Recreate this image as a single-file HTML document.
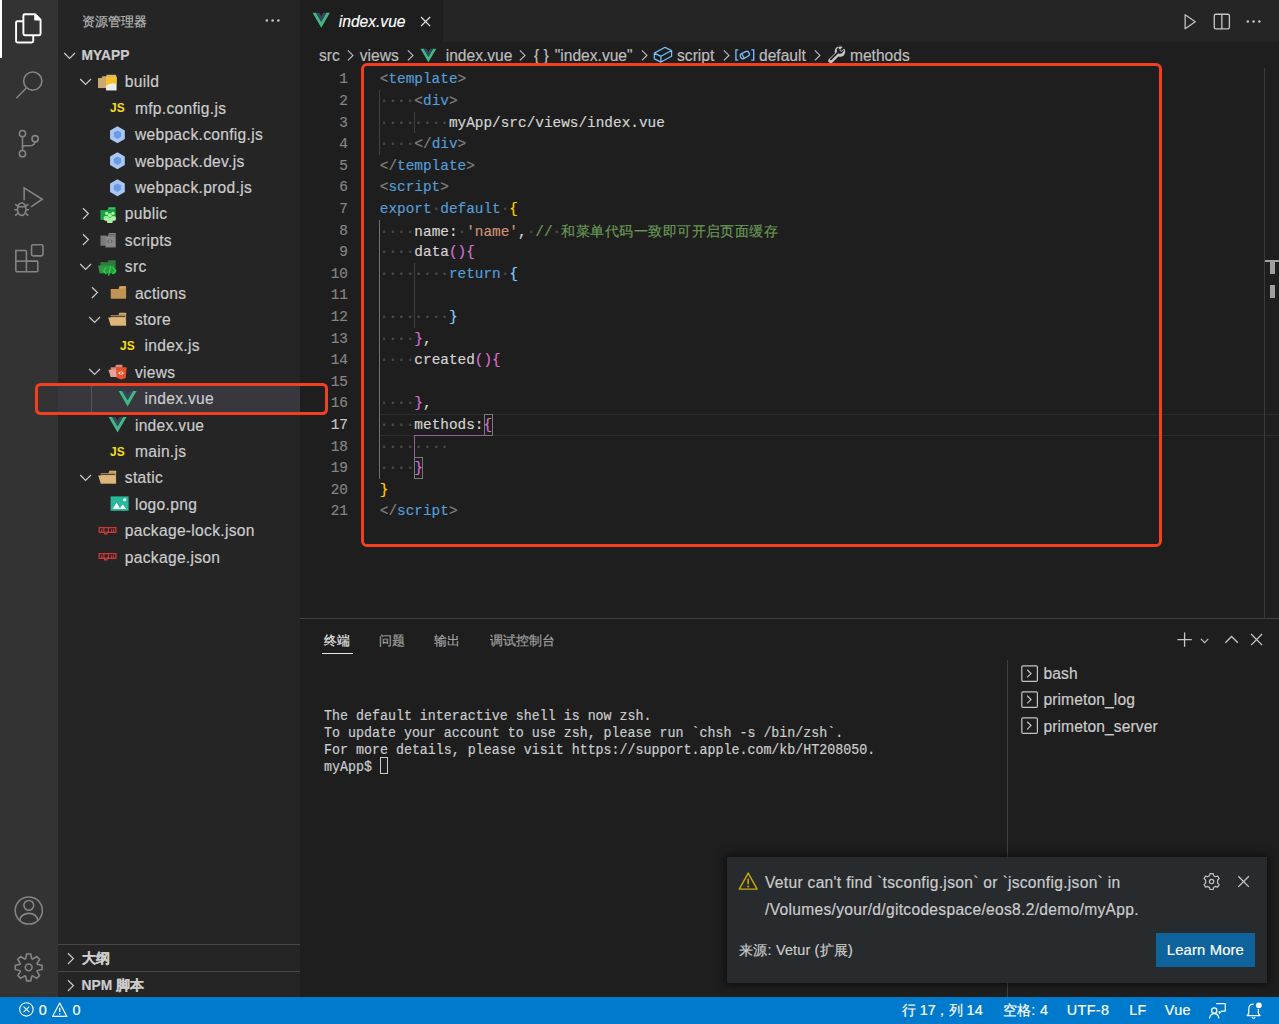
<!DOCTYPE html>
<html><head><meta charset="utf-8">
<style>
html,body{margin:0;padding:0;background:#1e1e1e;overflow:hidden;}
body{width:1279px;height:1024px;}
#w{position:absolute;left:0;top:0;width:1066px;height:854px;zoom:1.2;-webkit-text-stroke:0.15px currentColor;font-family:"Liberation Sans",sans-serif;color:#cccccc;overflow:hidden;background:#1e1e1e;}
.a{position:absolute;}
#act{left:0;top:0;width:48px;height:831px;background:#333333;}
#side{left:48px;top:0;width:202px;height:831px;background:#252526;}
#tabs{left:250px;top:0;width:816px;height:35px;background:#252526;}
#tab{left:250px;top:0;width:119px;height:35px;background:#1e1e1e;}
#editor{left:250px;top:35px;width:816px;height:480px;background:#1e1e1e;}
#panel{left:250px;top:515px;width:816px;height:316px;background:#1e1e1e;border-top:1px solid #414141;box-sizing:border-box;}
#status{left:0;top:831px;width:1066px;height:23px;background:#007acc;color:#fff;font-size:12px;}
.sb{height:22px;line-height:22px;font-size:13px;color:#cccccc;white-space:nowrap;letter-spacing:0.25px}
.row{position:absolute;left:0;width:202px;height:22px;line-height:22px;font-size:13px;color:#cccccc;white-space:nowrap;}
.row .t{position:absolute;top:0;}
.row svg{position:absolute;}
.code{position:absolute;left:316.5px;margin-top:0.8px;font-family:"Liberation Mono",monospace;font-size:12px;line-height:18px;height:18px;white-space:pre;color:#d4d4d4;}
.ln{position:absolute;left:250px;margin-top:0.8px;width:40px;text-align:right;font-family:"Liberation Mono",monospace;font-size:12px;line-height:18px;color:#858585;}
.p{color:#808080}.tg{color:#569cd6}.kw{color:#569cd6}.s{color:#ce9178}.c{color:#6a9955}.y{color:#ffd700}.m{color:#da70d6}.b{color:#87cefa}
.kw2{color:#569cd6}.cj{font-family:"Liberation Sans",sans-serif;letter-spacing:0.4px}
.pt{top:522.5px;height:24px;line-height:24px;font-size:11px;color:rgba(231,231,231,0.6)}
.st{top:831px;height:22px;line-height:22px;font-size:12px;color:#fff;white-space:nowrap;letter-spacing:0.3px}
.ws{color:rgba(227,228,226,0.22);font-weight:bold}
.term{position:absolute;left:270px;font-family:"Liberation Mono",monospace;font-size:11.1px;line-height:12.61px;white-space:pre;color:#cccccc;transform:scale(1,1.13);transform-origin:0 0}
</style></head><body><svg width="0" height="0" style="position:absolute">
<defs>
<symbol id="chd" viewBox="0 0 16 16"><path d="M3.5 5.8 L8 10.3 L12.5 5.8" fill="none" stroke="#c5c5c5" stroke-width="1.1"/></symbol>
<symbol id="chr" viewBox="0 0 16 16"><path d="M5.8 3.5 L10.3 8 L5.8 12.5" fill="none" stroke="#c5c5c5" stroke-width="1.1"/></symbol>
<symbol id="fclosed" viewBox="0 0 16 16"><path d="M2.3 5 H15.1 V13.1 H2.3 Z" fill="#c09553"/><path d="M9.5 2.5 H14.6 Q15.1 2.5 15.1 3 V5 H8.8 Z" fill="#c09553"/><path d="M9.9 3.5 H14.3 V4.3 H9.6Z" fill="#d9b27a"/></symbol>
<symbol id="fopen" viewBox="0 0 16 16"><path d="M2.3 4.4 H15.1 V12.94 H2.3 Z" fill="#c4a06a"/><path d="M9.5 2.25 H14.6 Q15.1 2.25 15.1 2.75 V4.4 H8.8 Z" fill="#dcb67a"/><path d="M9.9 3.2 H14.3 V4 H9.6Z" fill="#b08d5a"/><path d="M0.2 6.3 H14.3 L15.1 12.94 H2.3 Z" fill="#dcb67a"/><path d="M2.3 5.4 H14.2" stroke="#3a3226" stroke-width="0.7"/></symbol>
<symbol id="js" viewBox="0 0 16 16"><text transform="scale(0.92 1)" x="0.1" y="11.9" font-family="Liberation Sans" font-weight="bold" font-size="10.9" fill="#f5de19">JS</text></symbol>
<symbol id="wp" viewBox="0 0 16 16"><path d="M6.2 1 L12.35 4.55 V11.65 L6.2 15.2 L0.05 11.65 V4.55 Z" fill="#a9c7f3"/><path d="M6.2 4.6 L9.23 6.35 V9.85 L6.2 11.6 L3.17 9.85 V6.35 Z" fill="#6a9be6"/></symbol>
<symbol id="vue" viewBox="0 0 16 16"><g transform="translate(0.5 1.6) scale(0.05859)"><path d="M0 0 L128 220.8 L256 0 H204.8 L128 132.48 L50.56 0 Z" fill="#41b883"/><path d="M50.56 0 L128 133.12 L204.8 0 H157.44 L128 51.2 L97.92 0 Z" fill="#35495e"/></g></symbol>
<symbol id="npm" viewBox="0 0 16 16"><g><path d="M0.5 5 H15.5 V10 H8 V11.2 H5 V10 H0.5 Z" fill="#cb3837"/><path d="M1.6 6 H4.4 V9 H3.6 V6.8 H2.6 V9 H1.6Z M5.4 6 H8.2 V8.6 H6.9 V9.6 H6.1 V8.6 H5.4Z M9.2 6 H14.4 V9 H13.5 V6.8 H12.6 V9 H11.8 V6.8 H10.9 V9 H9.2Z" fill="#252526"/></g></symbol>
<symbol id="img" viewBox="0 0 16 16"><rect x="0.5" y="2" width="15" height="12" fill="#26b99a"/><path d="M2.2 12.5 L5.5 7 L8.5 12.5Z M8 12.5 L10.6 8.8 L13.6 12.5Z" fill="#fff"/><circle cx="12.3" cy="4.8" r="1.3" fill="#fff"/></symbol>
</defs></svg><div id="w">
<div class="a" id="act">
<div class="a" style="left:0;top:0;width:2px;height:48px;background:#fff"></div>
<svg class="a" style="left:0;top:0" width="48" height="831" viewBox="0 0 48 831" fill="none">
<g stroke="#ffffff" stroke-width="1.6" stroke-linejoin="round">
<path d="M19.5 17.6 H14.6 Q13.4 17.6 13.4 18.8 V34.2 Q13.4 35.4 14.6 35.4 H26.5 Q27.7 35.4 27.7 34.2 V29.3"/>
<path d="M20.7 11.8 H29.3 L33.8 16.3 V28.1 Q33.8 29.3 32.6 29.3 H20.7 Q19.5 29.3 19.5 28.1 V13 Q19.5 11.8 20.7 11.8 Z"/>
<path d="M29.3 11.8 V16.3 H33.8" fill="#fff"/>
</g>
<g stroke="#858585" stroke-width="1.3" fill="none">
<circle cx="27.3" cy="67.5" r="7.6"/>
<path d="M21.9 73.3 L13.6 81.8"/>
<circle cx="18.75" cy="111.3" r="2.6"/>
<circle cx="29.25" cy="115.6" r="2.6"/>
<circle cx="18.75" cy="128" r="2.6"/>
<path d="M18.75 113.9 V125.4"/>
<path d="M29.25 118.2 Q28.5 121.5 24.5 121.5 H21 Q18.75 121.5 18.75 123"/>
<path d="M20.13 166.8 V156.6 L35.2 166 L25.8 172.4" stroke-linejoin="miter"/>
<ellipse cx="18.1" cy="174.3" rx="3.55" ry="5.2"/>
<path d="M14.6 172.3 H21.6 M12.6 170.2 L14.85 171.7 M23.6 170.2 L21.35 171.7 M12 174.7 H14.5 M24.2 174.7 H21.7 M12.6 179.6 L14.85 177.8 M23.6 179.6 L21.35 177.8"/>
<path d="M13.2 208.7 H21.3 Q22 208.7 22 209.4 V226.5 H14 Q13.2 226.5 13.2 225.7 Z"/>
<path d="M22 217.6 H30.8 Q31.5 217.6 31.5 218.3 V225.7 Q31.5 226.5 30.8 226.5 H22"/>
<path d="M13.2 217.6 H22"/>
<rect x="26.3" y="204" width="9.5" height="9.2" rx="1.3"/>
<circle cx="24" cy="758.8" r="11.3"/>
<circle cx="24" cy="754.5" r="4.1"/>
<path d="M16.3 767.2 Q17.5 761.2 24 761.2 Q30.5 761.2 31.7 767.2"/>
</g>
<g transform="translate(23.9 806.25)" stroke="#858585" stroke-width="1.3" fill="none" stroke-linejoin="miter"><path d="M-2.63 -7.24 L-1.67 -11.18 L1.67 -11.18 L2.63 -7.24 L3.25 -6.98 L6.72 -9.08 L9.08 -6.72 L6.98 -3.25 L7.24 -2.63 L11.18 -1.67 L11.18 1.67 L7.24 2.63 L6.98 3.25 L9.08 6.72 L6.72 9.08 L3.25 6.98 L2.63 7.24 L1.67 11.18 L-1.67 11.18 L-2.63 7.24 L-3.25 6.98 L-6.72 9.08 L-9.08 6.72 L-6.98 3.25 L-7.24 2.63 L-11.18 1.67 L-11.18 -1.67 L-7.24 -2.63 L-6.98 -3.25 L-9.08 -6.72 L-6.72 -9.08 L-3.25 -6.98 Z"/><circle cx="0" cy="0" r="2.8"/></g>
</svg>
</div>
<div class="a" id="side"></div>
<div class="a" style="left:68px;top:0.7px;height:35px;line-height:35px;font-size:11px;color:#bbbbbb">资源管理器</div>
<svg class="a" style="left:219px;top:9px" width="16" height="16" viewBox="0 0 16 16" fill="#c5c5c5"><circle cx="3.2" cy="8" r="1.05"/><circle cx="8" cy="8" r="1.05"/><circle cx="12.8" cy="8" r="1.05"/></svg>
<svg class="a" style="left:50px;top:38px" width="16" height="16"><use href="#chd"/></svg>
<div class="a" style="left:68px;top:35.7px;height:22px;line-height:22px;font-size:11.5px;font-weight:bold;color:#cccccc">MYAPP</div>
<svg class="a" style="left:63px;top:60px" width="16" height="16"><use href="#chd"/></svg><svg class="a" style="left:82px;top:60px" width="16" height="16" viewBox="0 0 16 16"><path d="M0 5 H9.6 V13.4 H0 Z" fill="#c8aa6e"/><path d="M3.6 3.6 H8.6 Q9.2 3.6 9.2 4.2 V5 H3 Z" fill="#c8aa6e"/><path d="M6.7 4.2 H15.5 V15.4 H6.7 Z" fill="#ececec"/><path d="M6.7 4.2 H15.5 V10.2 Q11.1 8.2 6.7 11.6 Z" fill="#f6c026"/><path d="M7.2 2.2 H15 L15.5 4.4 H6.7 Z" fill="#d7b56d"/></svg><div class="a sb" style="left:104px;top:57.8px">build</div>
<svg class="a" style="left:92px;top:82px" width="16" height="16"><use href="#js"/></svg><div class="a sb" style="left:112.4px;top:79.8px">mfp.config.js</div>
<svg class="a" style="left:92px;top:104px" width="16" height="16"><use href="#wp"/></svg><div class="a sb" style="left:112.4px;top:101.8px">webpack.config.js</div>
<svg class="a" style="left:92px;top:126px" width="16" height="16"><use href="#wp"/></svg><div class="a sb" style="left:112.4px;top:123.8px">webpack.dev.js</div>
<svg class="a" style="left:92px;top:148px" width="16" height="16"><use href="#wp"/></svg><div class="a sb" style="left:112.4px;top:145.8px">webpack.prod.js</div>
<svg class="a" style="left:63px;top:170px" width="16" height="16"><use href="#chr"/></svg><svg class="a" style="left:82px;top:170px" width="16" height="16" viewBox="0 0 16 16"><path d="M2.05 5.1 H14.75 V13.3 H2.05 Z" fill="#1ba345"/><path d="M8.6 2.5 H14.2 Q14.75 2.5 14.75 3 V5.1 H7.9 Z" fill="#1ba345"/><path d="M9.2 3.3 H14 V4.2 H8.9 Z" fill="#45c46a"/><g fill="#a8f2a0"><circle cx="7.2" cy="7.8" r="1.35"/><circle cx="12.5" cy="7.8" r="1.35"/><ellipse cx="6.9" cy="12" rx="2.2" ry="2"/><ellipse cx="12.8" cy="12" rx="2.2" ry="2"/><circle cx="9.86" cy="9.4" r="1.6"/><ellipse cx="9.86" cy="13.9" rx="2.6" ry="2.4"/></g><path d="M4 13.3 H16 V16 H4Z" fill="#252526" opacity="0"/></svg><div class="a sb" style="left:104px;top:167.8px">public</div>
<svg class="a" style="left:63px;top:192px" width="16" height="16"><use href="#chr"/></svg><svg class="a" style="left:82px;top:192px" width="16" height="16" viewBox="0 0 16 16"><path d="M2.05 4.6 H7 V13.1 H2.05 Z" fill="#7b7b7b"/><path d="M6.3 5.2 H14.75 V14.4 H6.3 Z" fill="#8a8a8a"/><path d="M9 2.4 H14.3 Q14.75 2.4 14.75 2.9 V5.2 H8.3 Z" fill="#8a8a8a"/><path d="M9.4 3.3 H14 V4.3 H9.1Z" fill="#5e5e5e"/><path d="M9 8 L7.9 9.5 L9 11 M10.8 8 L11.9 9.5 L10.8 11" stroke="#555" stroke-width=".8" fill="none"/><path d="M6.3 14.4 H14.75" stroke="#5e5e5e" stroke-width=".6"/></svg><div class="a sb" style="left:104px;top:189.8px">scripts</div>
<svg class="a" style="left:63px;top:214px" width="16" height="16"><use href="#chd"/></svg><svg class="a" style="left:82px;top:214px" width="16" height="16" viewBox="0 0 16 16"><path d="M2.05 4.3 H14.75 V13.54 H2.05 Z" fill="#2a7d3a"/><path d="M8.6 2.8 H14.2 Q14.75 2.8 14.75 3.3 V4.75 H7.9 Z" fill="#2a7d3a"/><path d="M0 7.03 H13.1 L14.75 13.54 H1.4 Z" fill="#33944a"/><path d="M6.93 8.66 L4.65 11.4 L6.93 14.2 M12.14 8.66 L14.9 11.4 L12.14 14.2 M10.4 7.7 L8.9 15.5" stroke="#1ee23a" stroke-width="1.05" fill="none"/></svg><div class="a sb" style="left:104px;top:211.8px">src</div>
<svg class="a" style="left:71px;top:236px" width="16" height="16"><use href="#chr"/></svg><svg class="a" style="left:90px;top:236px" width="16" height="16"><use href="#fclosed"/></svg><div class="a sb" style="left:112.4px;top:233.8px">actions</div>
<svg class="a" style="left:71px;top:258px" width="16" height="16"><use href="#chd"/></svg><svg class="a" style="left:90px;top:258px" width="16" height="16"><use href="#fopen"/></svg><div class="a sb" style="left:112.4px;top:255.8px">store</div>
<svg class="a" style="left:100px;top:280px" width="16" height="16"><use href="#js"/></svg><div class="a sb" style="left:120.4px;top:277.8px">index.js</div>
<svg class="a" style="left:71px;top:302px" width="16" height="16"><use href="#chd"/></svg><svg class="a" style="left:90px;top:302px" width="16" height="16" viewBox="0 0 16 16"><path d="M2.3 4.4 H12 V12.5 H2.3 Z" fill="#d98b80"/><path d="M6.6 2.3 H11.6 Q12 2.3 12 2.7 V4.4 H6 Z" fill="#d98b80"/><path d="M0.3 6.5 H11 L12 12.5 H2.3 Z" fill="#e8a195"/><path d="M6.6 4.4 H15.55 L14.8 13.4 L11.1 14.66 L7.3 13.4 Z" fill="#e4532a"/><path d="M8.5 9.1 Q10.85 6.6 13.2 9.1 Q10.85 11.6 8.5 9.1 Z" fill="#ffffff"/><circle cx="10.85" cy="9.1" r="0.85" fill="#e4532a"/></svg><div class="a sb" style="left:112.4px;top:299.8px">views</div>
<div class="a" style="left:48px;top:321px;width:202px;height:22px;background:#37373d"></div><div class="a" style="left:76px;top:321px;width:1px;height:22px;background:#585858"></div><svg class="a" style="left:98.3px;top:324px" width="16" height="16"><use href="#vue"/></svg><div class="a sb" style="left:120.4px;top:321.8px">index.vue</div>
<svg class="a" style="left:90.3px;top:346px" width="16" height="16"><use href="#vue"/></svg><div class="a sb" style="left:112.4px;top:343.8px">index.vue</div>
<svg class="a" style="left:92px;top:368px" width="16" height="16"><use href="#js"/></svg><div class="a sb" style="left:112.4px;top:365.8px">main.js</div>
<svg class="a" style="left:63px;top:390px" width="16" height="16"><use href="#chd"/></svg><svg class="a" style="left:82px;top:390px" width="16" height="16"><use href="#fopen"/></svg><div class="a sb" style="left:104px;top:387.8px">static</div>
<svg class="a" style="left:92px;top:412px" width="16" height="16"><use href="#img"/></svg><div class="a sb" style="left:112.4px;top:409.8px">logo.png</div>
<svg class="a" style="left:82px;top:434px" width="16" height="16"><use href="#npm"/></svg><div class="a sb" style="left:104px;top:431.8px">package-lock.json</div>
<svg class="a" style="left:82px;top:456px" width="16" height="16"><use href="#npm"/></svg><div class="a sb" style="left:104px;top:453.8px">package.json</div>
<div class="a" style="left:48px;top:786.7px;width:202px;height:0.834px;background:#474747"></div>
<svg class="a" style="left:50.5px;top:791px" width="16" height="16"><use href="#chr"/></svg>
<div class="a" style="left:68px;top:788.7px;height:22px;line-height:22px;font-size:11.5px;font-weight:bold;color:#cccccc">大纲</div>
<div class="a" style="left:48px;top:808.9px;width:202px;height:0.834px;background:#474747"></div>
<svg class="a" style="left:50.5px;top:813px" width="16" height="16"><use href="#chr"/></svg>
<div class="a" style="left:68px;top:810.7px;height:22px;line-height:22px;font-size:11.5px;font-weight:bold;color:#cccccc">NPM 脚本</div>
<div class="a" style="left:29.3px;top:318.8px;width:244px;height:27px;border:2.75px solid #f23f20;border-radius:4.5px;box-sizing:border-box"></div>

<div class="a" id="tabs"></div>
<div class="a" id="tab"></div>
<svg class="a" style="left:260.2px;top:9.2px" width="15.4" height="15.4" viewBox="0 0 16 16"><use href="#vue"/></svg>
<div class="a" style="left:282.3px;top:0.8px;height:35px;line-height:35px;font-size:13px;font-style:italic;color:#ffffff">index.vue</div>
<svg class="a" style="left:347px;top:10px" width="16" height="16" viewBox="0 0 16 16"><path d="M4.2 4.2 L11.8 11.8 M11.8 4.2 L4.2 11.8" stroke="#e0e0e0" stroke-width="1.1"/></svg>
<svg class="a" style="left:983.3px;top:10.3px" width="16" height="16" viewBox="0 0 16 16"><path d="M4.3 2.3 V14 L12.7 8.1 Z" fill="none" stroke="#c5c5c5" stroke-width="1.05" stroke-linejoin="round"/></svg>
<svg class="a" style="left:1010px;top:10px" width="16" height="16" viewBox="0 0 16 16"><rect x="1.9" y="1.9" width="12.6" height="12.2" rx="1.3" fill="none" stroke="#c5c5c5" stroke-width="1.1"/><path d="M8.2 1.9 V14.1" stroke="#c5c5c5" stroke-width="1.1"/></svg>
<svg class="a" style="left:1036.3px;top:10.2px" width="16" height="16" viewBox="0 0 16 16" fill="#c5c5c5"><circle cx="3.2" cy="8" r="1.05"/><circle cx="8" cy="8" r="1.05"/><circle cx="12.8" cy="8" r="1.05"/></svg>

<div class="a" style="left:265.8px;font-size:13px;color:#bdbdbd;height:22px;line-height:22px;top:35.6px">src</div>
<svg class="a" style="left:285px;top:39px" width="14" height="14" viewBox="0 0 16 16"><path d="M5.6 3.2 L10.4 8 L5.6 12.8" fill="none" stroke="#bdbdbd" stroke-width="1.1"/></svg>
<div class="a" style="left:299.8px;font-size:13px;color:#bdbdbd;height:22px;line-height:22px;top:35.6px">views</div>
<svg class="a" style="left:335px;top:39px" width="14" height="14" viewBox="0 0 16 16"><path d="M5.6 3.2 L10.4 8 L5.6 12.8" fill="none" stroke="#bdbdbd" stroke-width="1.1"/></svg>
<svg class="a" style="left:349.8px;top:39px" width="14" height="14" viewBox="0 0 16 16"><use href="#vue"/></svg>
<div class="a" style="left:371.4px;font-size:13px;color:#bdbdbd;height:22px;line-height:22px;top:35.6px">index.vue</div>
<svg class="a" style="left:428.5px;top:39px" width="14" height="14" viewBox="0 0 16 16"><path d="M5.6 3.2 L10.4 8 L5.6 12.8" fill="none" stroke="#bdbdbd" stroke-width="1.1"/></svg>
<div class="a" style="left:445px;font-size:13px;color:#bdbdbd;height:22px;line-height:22px;top:35.6px">{ }</div>
<div class="a" style="left:462.3px;font-size:13px;color:#bdbdbd;height:22px;line-height:22px;top:35.6px">"index.vue"</div>
<svg class="a" style="left:530px;top:39px" width="14" height="14" viewBox="0 0 16 16"><path d="M5.6 3.2 L10.4 8 L5.6 12.8" fill="none" stroke="#bdbdbd" stroke-width="1.1"/></svg>
<svg class="a" style="left:544px;top:38px" width="18" height="16" viewBox="0 0 18 16"><path d="M1.1 5.9 L10 1.1 L15.5 3.8 L6.6 8.6 Z M1.1 5.9 V10.7 L6.6 13.4 L15.5 8.6 V3.8 M6.6 8.6 V13.4" fill="none" stroke="#75beff" stroke-width="1.05" stroke-linejoin="round"/></svg>
<div class="a" style="left:564.2px;font-size:13px;color:#bdbdbd;height:22px;line-height:22px;top:35.6px">script</div>
<svg class="a" style="left:598.5px;top:39px" width="14" height="14" viewBox="0 0 16 16"><path d="M5.6 3.2 L10.4 8 L5.6 12.8" fill="none" stroke="#bdbdbd" stroke-width="1.1"/></svg>
<svg class="a" style="left:612px;top:38px" width="18" height="16" viewBox="0 0 18 16"><path d="M3.6 3.3 H1.6 V11.8 H3.6 M14.4 3.3 H16.4 V11.8 H14.4" fill="none" stroke="#75beff" stroke-width="1.1"/><g transform="rotate(-28 9 7.5)"><rect x="5" y="5.3" width="8" height="4.4" rx="2.2" fill="none" stroke="#75beff" stroke-width="1.05"/><path d="M7.3 5.3 V9.7" stroke="#75beff" stroke-width="1"/></g></svg>
<div class="a" style="left:632.5px;font-size:13px;color:#bdbdbd;height:22px;line-height:22px;top:35.6px">default</div>
<svg class="a" style="left:674.5px;top:39px" width="14" height="14" viewBox="0 0 16 16"><path d="M5.6 3.2 L10.4 8 L5.6 12.8" fill="none" stroke="#bdbdbd" stroke-width="1.1"/></svg>
<svg class="a" style="left:689px;top:37.5px" width="16" height="16" viewBox="0 0 16 16"><path fill="#c5c5c5" fill-rule="evenodd" d="M2.807 14.975a1.75 1.75 0 0 1-1.255-.556 1.684 1.684 0 0 1-.544-1.1A1.72 1.72 0 0 1 1.36 12.1c1.208-1.27 3.587-3.65 5.318-5.345a4.257 4.257 0 0 1 .048-3.078 4.095 4.095 0 0 1 1.665-1.97 4.259 4.259 0 0 1 4.04-.278l.617.285-2.6 2.6 1.5 1.5 2.6-2.6.279.618a4.258 4.258 0 0 1-.279 4.04 4.168 4.168 0 0 1-2.022 1.674 4.2 4.2 0 0 1-3.005.059c-1.806 1.8-4.136 4.2-5.317 5.3a1.679 1.679 0 0 1-1.2.5zm8.5-13.6a3.166 3.166 0 0 0-2.040.756 3.1 3.1 0 0 0-.987 3.4l.1.3-.2.2c-1.766 1.73-4.262 4.226-5.483 5.51a.69.69 0 0 0-.162.466.681.681 0 0 0 .223.484.7.7 0 0 0 .949.08c1.194-1.11 3.673-3.618 5.5-5.423l.2-.2.3.1a3.193 3.193 0 0 0 3.385-.744 3.2 3.2 0 0 0 .752-3.137l-1.895 1.895-2.913-2.913 1.894-1.894z"/></svg>
<div class="a" style="left:708.3px;font-size:13px;color:#bdbdbd;height:22px;line-height:22px;top:35.6px">methods</div>


<div class="a" style="left:316.5px;top:345px;width:750px;height:18px;border-top:1.3px solid #2c2c2c;border-bottom:1.3px solid #2c2c2c;box-sizing:border-box"></div>
<div class="a" style="left:315.83px;top:75px;width:0.834px;height:54px;background:#404040"></div>
<div class="a" style="left:345px;top:93px;width:0.834px;height:18px;background:#404040"></div>
<div class="a" style="left:315.83px;top:183px;width:0.834px;height:216px;background:#707070"></div>
<div class="a" style="left:345px;top:219px;width:0.834px;height:54px;background:#404040"></div>
<div class="a" style="left:345px;top:362.5px;width:58.5px;height:1px;background:#9a5aa0"></div>
<div class="a" style="left:345px;top:362.5px;width:1px;height:18.5px;background:#9a5aa0"></div>
<div class="a" style="left:403.5px;top:345px;width:7.2px;height:18px;border:1px solid #7a7a7a;box-sizing:border-box"></div>
<div class="a" style="left:345.3px;top:381px;width:7.2px;height:18px;border:1px solid #7a7a7a;box-sizing:border-box"></div>
<div class="ln" style="top:57px;color:#858585">1</div>
<div class="code" style="top:57px"><span class="p">&lt;</span><span class="tg">template</span><span class="p">&gt;</span></div>
<div class="ln" style="top:75px;color:#858585">2</div>
<div class="code" style="top:75px"><span class="ws">·</span><span class="ws">·</span><span class="ws">·</span><span class="ws">·</span><span class="p">&lt;</span><span class="tg">div</span><span class="p">&gt;</span></div>
<div class="ln" style="top:93px;color:#858585">3</div>
<div class="code" style="top:93px"><span class="ws">·</span><span class="ws">·</span><span class="ws">·</span><span class="ws">·</span><span class="ws">·</span><span class="ws">·</span><span class="ws">·</span><span class="ws">·</span>myApp/src/views/index.vue</div>
<div class="ln" style="top:111px;color:#858585">4</div>
<div class="code" style="top:111px"><span class="ws">·</span><span class="ws">·</span><span class="ws">·</span><span class="ws">·</span><span class="p">&lt;/</span><span class="tg">div</span><span class="p">&gt;</span></div>
<div class="ln" style="top:129px;color:#858585">5</div>
<div class="code" style="top:129px"><span class="p">&lt;/</span><span class="tg">template</span><span class="p">&gt;</span></div>
<div class="ln" style="top:147px;color:#858585">6</div>
<div class="code" style="top:147px"><span class="p">&lt;</span><span class="tg">script</span><span class="p">&gt;</span></div>
<div class="ln" style="top:165px;color:#858585">7</div>
<div class="code" style="top:165px"><span class="kw">export</span><span class="ws">·</span><span class="kw">default</span><span class="ws">·</span><span class="y">{</span></div>
<div class="ln" style="top:183px;color:#858585">8</div>
<div class="code" style="top:183px"><span class="ws">·</span><span class="ws">·</span><span class="ws">·</span><span class="ws">·</span>name:<span class="ws">·</span><span class="s">'name'</span>,<span class="ws">·</span><span class="c">//<span class="ws">·</span><span class="cj">和菜单代码一致即可开启页面缓存</span></span></div>
<div class="ln" style="top:201px;color:#858585">9</div>
<div class="code" style="top:201px"><span class="ws">·</span><span class="ws">·</span><span class="ws">·</span><span class="ws">·</span>data<span class="m">(){</span></div>
<div class="ln" style="top:219px;color:#858585">10</div>
<div class="code" style="top:219px"><span class="ws">·</span><span class="ws">·</span><span class="ws">·</span><span class="ws">·</span><span class="ws">·</span><span class="ws">·</span><span class="ws">·</span><span class="ws">·</span><span class="kw2">return</span><span class="ws">·</span><span class="b">{</span></div>
<div class="ln" style="top:237px;color:#858585">11</div>
<div class="code" style="top:237px"></div>
<div class="ln" style="top:255px;color:#858585">12</div>
<div class="code" style="top:255px"><span class="ws">·</span><span class="ws">·</span><span class="ws">·</span><span class="ws">·</span><span class="ws">·</span><span class="ws">·</span><span class="ws">·</span><span class="ws">·</span><span class="b">}</span></div>
<div class="ln" style="top:273px;color:#858585">13</div>
<div class="code" style="top:273px"><span class="ws">·</span><span class="ws">·</span><span class="ws">·</span><span class="ws">·</span><span class="m">}</span>,</div>
<div class="ln" style="top:291px;color:#858585">14</div>
<div class="code" style="top:291px"><span class="ws">·</span><span class="ws">·</span><span class="ws">·</span><span class="ws">·</span>created<span class="m">(){</span></div>
<div class="ln" style="top:309px;color:#858585">15</div>
<div class="code" style="top:309px"></div>
<div class="ln" style="top:327px;color:#858585">16</div>
<div class="code" style="top:327px"><span class="ws">·</span><span class="ws">·</span><span class="ws">·</span><span class="ws">·</span><span class="m">}</span>,</div>
<div class="ln" style="top:345px;color:#c6c6c6">17</div>
<div class="code" style="top:345px"><span class="ws">·</span><span class="ws">·</span><span class="ws">·</span><span class="ws">·</span>methods:<span class="m">{</span></div>
<div class="ln" style="top:363px;color:#858585">18</div>
<div class="code" style="top:363px"><span class="ws">·</span><span class="ws">·</span><span class="ws">·</span><span class="ws">·</span><span class="ws">·</span><span class="ws">·</span><span class="ws">·</span><span class="ws">·</span></div>
<div class="ln" style="top:381px;color:#858585">19</div>
<div class="code" style="top:381px"><span class="ws">·</span><span class="ws">·</span><span class="ws">·</span><span class="ws">·</span><span class="m">}</span></div>
<div class="ln" style="top:399px;color:#858585">20</div>
<div class="code" style="top:399px"><span class="y">}</span></div>
<div class="ln" style="top:417px;color:#858585">21</div>
<div class="code" style="top:417px"><span class="p">&lt;/</span><span class="tg">script</span><span class="p">&gt;</span></div>
<div class="a" style="left:1053.5px;top:57px;width:1px;height:458px;background:#3a3a3a"></div>
<div class="a" style="left:1054px;top:217px;width:12px;height:1.2px;background:#a0a0a0"></div>
<div class="a" style="left:1058.3px;top:217px;width:4.2px;height:11px;background:#a0a0a0"></div>
<div class="a" style="left:1058.3px;top:237.5px;width:4.2px;height:10.5px;background:#a0a0a0"></div>
<div class="a" style="left:300.5px;top:52.5px;width:667.75px;height:403px;border:2.9px solid #f23f20;border-radius:5px;box-sizing:border-box"></div>

<div class="a" id="panel"></div>
<div class="a pt" style="left:269.7px;color:#e7e7e7">终端</div>
<div class="a" style="left:268px;top:544px;width:26px;height:1px;background:#e7e7e7"></div>
<div class="a pt" style="left:316px">问题</div>
<div class="a pt" style="left:362px">输出</div>
<div class="a pt" style="left:408.3px">调试控制台</div>
<svg class="a" style="left:979px;top:525px" width="16" height="16" viewBox="0 0 16 16"><path d="M8 2 V14 M2 8 H14" stroke="#c5c5c5" stroke-width="1.1"/></svg>
<svg class="a" style="left:998.5px;top:528px" width="11" height="11" viewBox="0 0 16 16"><path d="M3.5 6 L8 10.5 L12.5 6" fill="none" stroke="#c5c5c5" stroke-width="1.4"/></svg>
<svg class="a" style="left:1018px;top:525px" width="16" height="16" viewBox="0 0 16 16"><path d="M2.8 10.6 L8 5.4 L13.2 10.6" fill="none" stroke="#c5c5c5" stroke-width="1.1"/></svg>
<svg class="a" style="left:1039.5px;top:525px" width="16" height="16" viewBox="0 0 16 16"><path d="M3.4 3.4 L12.6 12.6 M12.6 3.4 L3.4 12.6" stroke="#c5c5c5" stroke-width="1.1"/></svg>
<div class="term" style="top:590px">The default interactive shell is now zsh.
To update your account to use zsh, please run `chsh -s /bin/zsh`.
For more details, please visit https://support.apple.com/kb/HT208050.
myApp$ </div>
<div class="a" style="left:316.5px;top:630.8px;width:6.8px;height:14.2px;border:1px solid #cccccc;box-sizing:border-box"></div>
<div class="a" style="left:839px;top:550px;width:1px;height:281px;background:#414141"></div>
<svg class="a" style="left:850.2px;top:553px" width="16" height="16" viewBox="0 0 16 16"><rect x="1.5" y="1.5" width="13" height="13" rx="1" fill="none" stroke="#c5c5c5" stroke-width="1"/><path d="M6 4.8 L9.2 8 L6 11.2" fill="none" stroke="#c5c5c5" stroke-width="1"/></svg><div class="a" style="left:869.5px;top:550.9px;height:22px;line-height:22px;font-size:13px;color:#cccccc;letter-spacing:0.1px">bash</div><svg class="a" style="left:850.2px;top:575px" width="16" height="16" viewBox="0 0 16 16"><rect x="1.5" y="1.5" width="13" height="13" rx="1" fill="none" stroke="#c5c5c5" stroke-width="1"/><path d="M6 4.8 L9.2 8 L6 11.2" fill="none" stroke="#c5c5c5" stroke-width="1"/></svg><div class="a" style="left:869.5px;top:572.9px;height:22px;line-height:22px;font-size:13px;color:#cccccc;letter-spacing:0.1px">primeton_log</div><svg class="a" style="left:850.2px;top:597px" width="16" height="16" viewBox="0 0 16 16"><rect x="1.5" y="1.5" width="13" height="13" rx="1" fill="none" stroke="#c5c5c5" stroke-width="1"/><path d="M6 4.8 L9.2 8 L6 11.2" fill="none" stroke="#c5c5c5" stroke-width="1"/></svg><div class="a" style="left:869.5px;top:594.9px;height:22px;line-height:22px;font-size:13px;color:#cccccc;letter-spacing:0.1px">primeton_server</div>

<div class="a" style="left:606px;top:714.3px;width:449.5px;height:104.6px;background:#282b2e;box-shadow:0 0 8px 2px rgba(0,0,0,0.6)"></div>
<svg class="a" style="left:615px;top:726px" width="17" height="17" viewBox="0 0 16 16"><path d="M8 1.6 L15 14.2 H1 Z" fill="none" stroke="#cca700" stroke-width="1.1" stroke-linejoin="round"/><path d="M8 6 V10.4" stroke="#cca700" stroke-width="1.3"/><circle cx="8" cy="12.2" r=".75" fill="#cca700"/></svg>
<div class="a" style="left:637.5px;top:725.3px;width:420px;font-size:13px;line-height:22px;color:#cccccc;letter-spacing:0.25px;white-space:nowrap">Vetur can't find `tsconfig.json` or `jsconfig.json` in<br>/Volumes/your/d/gitcodespace/eos8.2/demo/myApp.</div>
<svg class="a" style="left:1001.5px;top:726.5px" width="16" height="16" viewBox="0 0 16 16"><g transform="translate(8 8)" fill="none" stroke="#c5c5c5" stroke-width="1"><path d="M-1.3 -6.6 L1.3 -6.6 L1.7 -4.9 L3.4 -4 L5 -4.7 L6.3 -2.5 L5 -1.3 L5 1.3 L6.3 2.5 L5 4.7 L3.4 4 L1.7 4.9 L1.3 6.6 L-1.3 6.6 L-1.7 4.9 L-3.4 4 L-5 4.7 L-6.3 2.5 L-5 1.3 L-5 -1.3 L-6.3 -2.5 L-5 -4.7 L-3.4 -4 L-1.7 -4.9 Z" stroke-linejoin="round"/><circle r="1.8"/></g></svg>
<svg class="a" style="left:1028px;top:726.5px" width="16" height="16" viewBox="0 0 16 16"><path d="M3.6 3.6 L12.4 12.4 M12.4 3.6 L3.6 12.4" stroke="#c5c5c5" stroke-width="1.1"/></svg>
<div class="a" style="left:616px;top:781.9px;font-size:12px;line-height:20px;color:#cccccc;letter-spacing:0.15px">来源: Vetur (扩展)</div>
<div class="a" style="left:963px;top:777.5px;width:83px;height:28px;background:#0e639c;color:#ffffff;font-size:12.3px;line-height:28px;text-align:center;letter-spacing:0.15px;padding-top:0.6px;box-sizing:border-box">Learn More</div>
<div class="a" id="status"></div>
<svg class="a" style="left:14.7px;top:834.2px" width="14" height="14" viewBox="0 0 16 16"><circle cx="8" cy="8" r="6.4" fill="none" stroke="#fff" stroke-width="1.05"/><path d="M5.3 5.3 L10.7 10.7 M10.7 5.3 L5.3 10.7" stroke="#fff" stroke-width="1"/></svg>
<div class="a st" style="left:32.2px">0</div>
<svg class="a" style="left:42.55px;top:834.4px" width="14.5" height="14.5" viewBox="0 0 16 16"><path d="M8 1.8 L14.6 14.2 H1.4 Z" fill="none" stroke="#fff" stroke-width="1.1" stroke-linejoin="round"/><path d="M8 6.2 V10.2" stroke="#fff" stroke-width="1.2"/><circle cx="8" cy="12" r=".7" fill="#fff"/></svg>
<div class="a st" style="left:60.4px">0</div>
<div class="a st" style="left:751.5px;letter-spacing:0">行 17<span style="margin-left:-1px;margin-right:0">，</span>列 14</div>
<div class="a st" style="left:835.5px">空格: 4</div>
<div class="a st" style="left:889px">UTF-8</div>
<div class="a st" style="left:941px">LF</div>
<div class="a st" style="left:970.7px">Vue</div>
<svg class="a" style="left:1006.5px;top:834.5px" width="16" height="16" viewBox="0 0 16 16"><path d="M6.8 2.2 H14.4 V8.4 H11.4 L9.4 10.3 V8.4" fill="none" stroke="#fff" stroke-width="1" stroke-linejoin="round"/><circle cx="5.2" cy="8" r="2.2" fill="none" stroke="#fff" stroke-width="1"/><path d="M1.3 14.6 Q1.8 10.6 5.2 10.6 Q8.6 10.6 9.1 14.6" fill="none" stroke="#fff" stroke-width="1"/></svg>
<svg class="a" style="left:1037px;top:834.5px" width="16" height="16" viewBox="0 0 16 16"><path d="M8 2.6 Q4 2.6 4 6.6 V10.4 L2.6 12.2 H13.4 L12 10.4 V6.6" fill="none" stroke="#fff" stroke-width="1" stroke-linejoin="round"/><path d="M6.6 13.6 Q8 15.2 9.4 13.6" fill="none" stroke="#fff" stroke-width="1"/><circle cx="12.4" cy="3.6" r="2.4" fill="#fff"/></svg>

</div></body></html>
